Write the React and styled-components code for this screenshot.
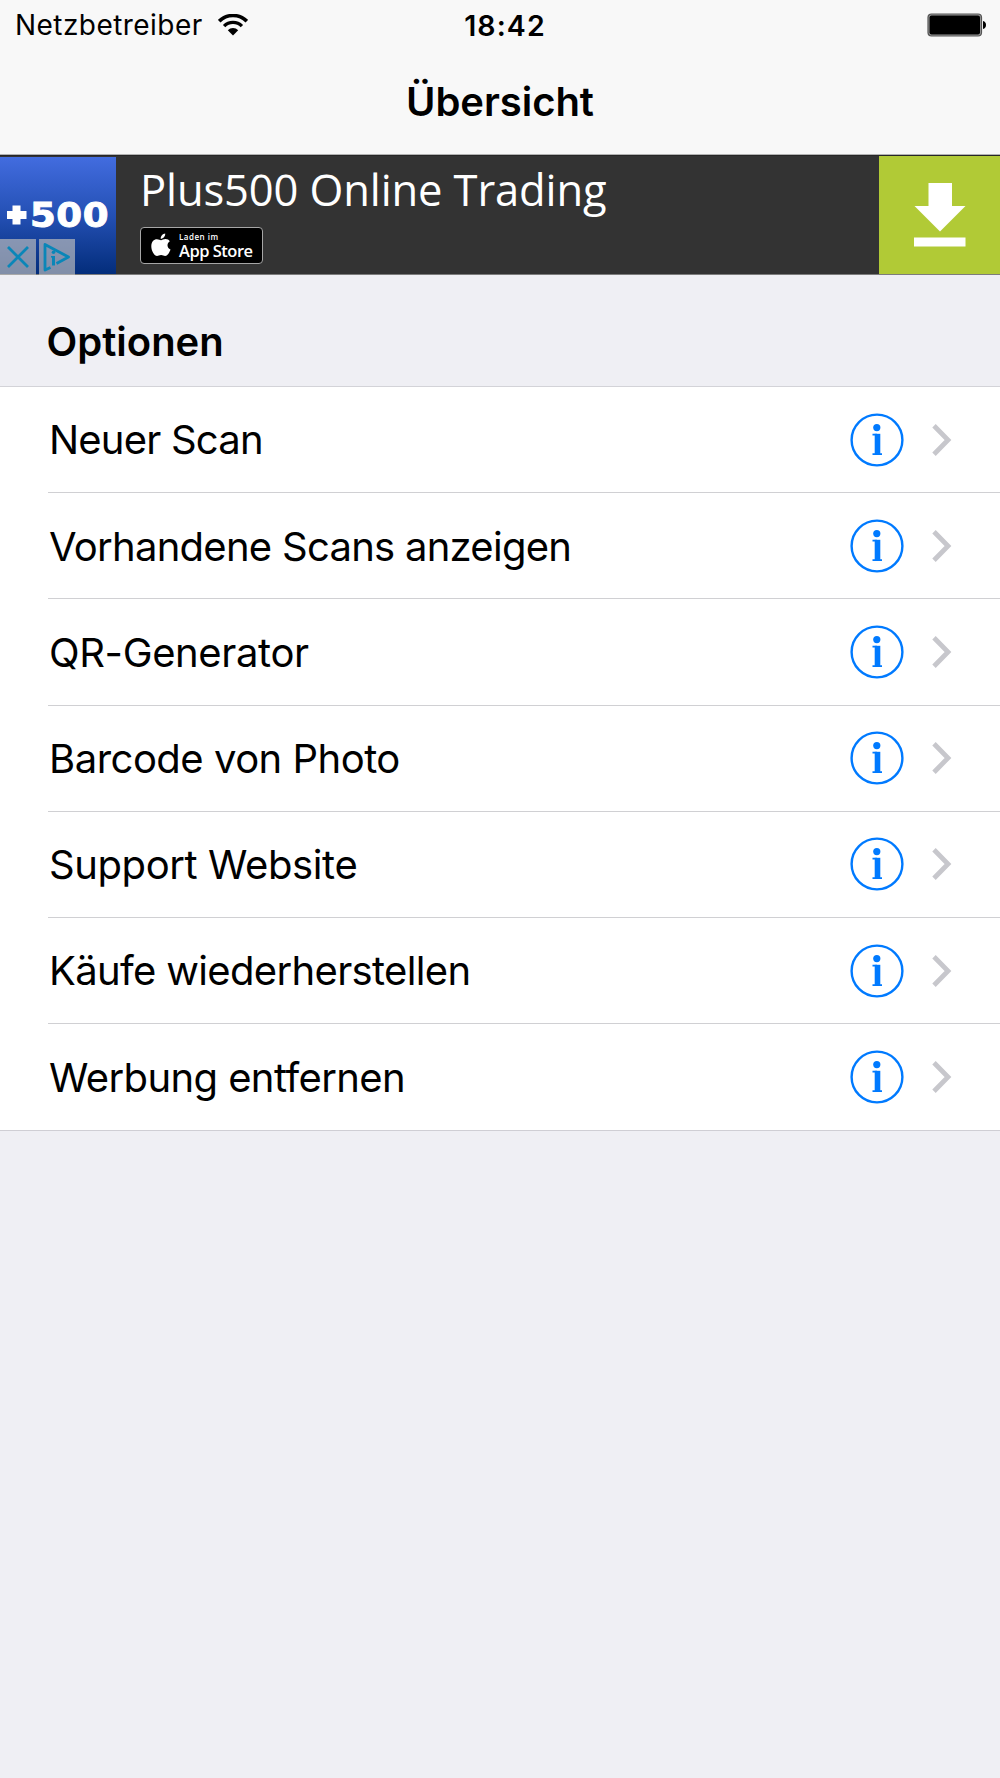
import React from "react";
import styled, { createGlobalStyle } from "styled-components";

const GlobalStyle = createGlobalStyle`
  * {
    box-sizing: border-box;
  }
  body {
    margin: 0;
    background: #efeff4;
    font-family: Inter, "Liberation Sans", sans-serif;
    color: #000;
  }
`;

const Screen = styled.div`
  width: 1000px;
  height: 1778px;
  display: flex;
  flex-direction: column;
  background: #efeff4;
  overflow: hidden;
`;

const TopBar = styled.header`
  height: 155px;
  flex: none;
  background: #f8f8f8;
  border-bottom: 1px solid #b2b2b2;
`;

const StatusBar = styled.div`
  height: 50px;
  display: grid;
  grid-template-columns: 1fr auto 1fr;
  align-items: center;
  padding: 0 13px 0 15px;
`;

const Carrier = styled.div`
  display: flex;
  align-items: center;
  gap: 15px;
  font-size: 28px;
  letter-spacing: 0.45px;
`;

const Clock = styled.div`
  font-size: 28.5px;
  font-weight: 600;
  letter-spacing: 1.1px;
  padding-left: 8px;
`;

const BatterySlot = styled.div`
  display: flex;
  justify-content: flex-end;
`;

const NavTitle = styled.h1`
  margin: 0;
  height: 102px;
  display: flex;
  align-items: center;
  justify-content: center;
  font-size: 40px;
  font-weight: 600;
  letter-spacing: -0.05px;
`;

const AdBanner = styled.section`
  height: 120px;
  flex: none;
  display: flex;
  background: #333;
  border-top: 1px solid #262626;
  border-bottom: 1px solid #7c7c7c;
`;

const AdLogo = styled.div`
  position: relative;
  width: 116px;
  height: 117px;
  margin-top: 1px;
  display: flex;
  align-items: center;
  padding: 0 0 1px 7px;
  gap: 3px;
  background: linear-gradient(#426cdf, #2450b4 50%, #032d7b);
`;

const AdNumber = styled.span`
  color: #fff;
  font-family: "DejaVu Sans", sans-serif;
  font-weight: 700;
  font-size: 34px;
  line-height: 34px;
  letter-spacing: 0.5px;
  -webkit-text-stroke: 1px #fff;
  transform: scaleX(1.09);
  transform-origin: left;
`;

const AdChoices = styled.div`
  position: absolute;
  left: 0;
  bottom: -1px;
  display: flex;
  gap: 3px;
`;

const AdChoice = styled.div`
  width: 36px;
  height: 36px;
  display: flex;
  align-items: center;
  justify-content: center;
  background: rgba(190, 190, 190, 0.68);
`;

const AdBody = styled.div`
  flex: 1;
  display: flex;
  flex-direction: column;
  align-items: flex-start;
  padding: 6px 0 0 24px;
`;

const AdTitle = styled.div`
  color: #fff;
  font-family: "Open Sans", "Noto Sans", sans-serif;
  font-weight: 400;
  font-size: 43.5px;
  line-height: 56px;
  letter-spacing: -0.12px;
  white-space: nowrap;
`;

const StoreBadge = styled.div`
  width: 123px;
  height: 37px;
  margin-top: 9px;
  display: flex;
  align-items: center;
  gap: 8px;
  padding: 0 0 1px 10px;
  background: #000;
  border: 1px solid #a6a6a6;
  border-radius: 4px;
  color: #fff;
  font-family: "Open Sans", "Noto Sans", sans-serif;
`;

const StoreText = styled.div`
  display: flex;
  flex-direction: column;
`;

const StoreHint = styled.span`
  font-size: 8px;
  line-height: 10px;
  font-weight: 600;
  letter-spacing: 0.5px;
`;

const StoreName = styled.span`
  font-size: 16.5px;
  line-height: 17px;
  font-weight: 600;
  letter-spacing: -0.5px;
  white-space: nowrap;
`;

const DownloadButton = styled.div`
  width: 121px;
  display: flex;
  justify-content: center;
  padding-top: 27px;
  background: #b1ca36;
`;

const SectionHeader = styled.h2`
  margin: 0;
  height: 112px;
  flex: none;
  padding: 42px 0 0 46.5px;
  font-size: 40px;
  line-height: 50px;
  font-weight: 600;
  border-bottom: 1px solid #d3d3d8;
`;

const OptionList = styled.ul`
  margin: 0;
  padding: 0;
  list-style: none;
  background: #fff;
  border-bottom: 1px solid #cfced4;
`;

const OptionRow = styled.li`
  height: 106.2px;
  margin-left: 48px;
  padding-right: 48px;
  display: flex;
  align-items: center;
  border-bottom: 1px solid ${(props) => (props.$last ? "transparent" : "#d0d0d3")};
`;

const OptionLabel = styled.span`
  flex: 1;
  padding: 0.6px 0 0 1px;
  font-size: 40px;
  letter-spacing: ${(props) => props.$spacing || 0}px;
  font-variant-ligatures: none;
`;

const InfoIcon = styled.svg`
  width: 54px;
  height: 54px;
  margin-right: 28.5px;
`;

const options = [
  { label: "Neuer Scan", spacing: -0.8 },
  { label: "Vorhandene Scans anzeigen", spacing: -0.73 },
  { label: "QR-Generator", spacing: -0.36 },
  { label: "Barcode von Photo", spacing: -0.5 },
  { label: "Support Website", spacing: -0.4 },
  { label: "Käufe wiederherstellen", spacing: -0.66 },
  { label: "Werbung entfernen", spacing: -0.6 },
];

const Wifi = () => (
  <svg width="30" height="22" viewBox="0 0 30 22" fill="none" stroke="#000">
    <path d="M1.2 7.2A19.5 19.5 0 0 1 28.8 7.2" strokeWidth="3.6" />
    <path d="M6.1 12.1A12.6 12.6 0 0 1 23.9 12.1" strokeWidth="3.4" />
    <path d="M15 21.5L9.8 16.2A7.4 7.4 0 0 1 20.2 16.2Z" fill="#000" stroke="none" />
  </svg>
);

const Battery = () => (
  <svg width="60" height="24" viewBox="0 0 60 24">
    <rect x="1" y="1" width="53.5" height="22" rx="3.5" fill="#999" stroke="#555" strokeWidth="1.2" />
    <rect x="2.5" y="2.5" width="50.5" height="19" rx="2" />
    <path d="M56 8C60 8.5 60 15.5 56 16Z" />
  </svg>
);

const Apple = () => (
  <svg width="20" height="24" viewBox="0 0 20 24" fill="#fff">
    <path d="M14.2 0.5C14.5 3.2 12.2 5.8 9.7 5.8C9.4 3.2 11.8 0.8 14.2 0.5Z" />
    <path d="M10 7.2C11.2 7.2 12.5 6 14.7 6.1C16.4 6.2 17.9 6.9 18.8 8.3C15.4 10.4 15.9 15.1 19.5 16.5C18.4 19.5 16.4 23 14.2 23C12.6 23 12 22 10.1 22C8.2 22 7.5 23 6 23C3.2 23 0.3 17.6 0.3 13.2C0.3 8.8 2.9 6.2 5.9 6.2C7.7 6.2 9 7.2 10 7.2Z" />
  </svg>
);

const App = () => {
  return (
    <>
      <GlobalStyle />
      <Screen>
        <TopBar>
          <StatusBar>
            <Carrier>
              Netzbetreiber
              <Wifi />
            </Carrier>
            <Clock>18:42</Clock>
            <BatterySlot>
              <Battery />
            </BatterySlot>
          </StatusBar>
          <NavTitle>Übersicht</NavTitle>
        </TopBar>

        <AdBanner>
          <AdLogo>
            <svg width="20" height="20" viewBox="0 0 20 20" fill="#fff">
              <path d="M5.5 0.5H13.5V6H19.5V14H13.5V19.5H5.5V14H0V6H5.5Z" />
            </svg>
            <AdNumber>500</AdNumber>
            <AdChoices>
              <AdChoice>
                <svg width="24" height="24" viewBox="0 0 24 24" stroke="#0a86b8" strokeWidth="2.8">
                  <path d="M2 2L22 22M22 2L2 22" />
                </svg>
              </AdChoice>
              <AdChoice>
                <svg width="30" height="30" viewBox="0 0 30 30" fill="none" stroke="#0a86b8" strokeWidth="2.8">
                  <path d="M8.5 25.5L3 28V2.5L26.5 15L14.5 21.5" strokeLinejoin="round" />
                  <path d="M11.5 14V23.500" strokeWidth="3" />
                  <path d="M9 14.800H11.500" strokeWidth="1.600" />
                  <circle cx="11.500" cy="10.200" r="1.800" fill="#0a86b8" stroke="none" />
                </svg>
              </AdChoice>
            </AdChoices>
          </AdLogo>
          <AdBody>
            <AdTitle>Plus500 Online Trading</AdTitle>
            <StoreBadge>
              <Apple />
              <StoreText>
                <StoreHint>Laden im</StoreHint>
                <StoreName>App Store</StoreName>
              </StoreText>
            </StoreBadge>
          </AdBody>
          <DownloadButton>
            <svg width="52" height="64" viewBox="0 0 52 64" fill="#fff">
              <path d="M14.5 0H38V23H51.5L26 48.5L0.5 23H14.5Z" />
              <rect x="0" y="54.5" width="51.5" height="9" />
            </svg>
          </DownloadButton>
        </AdBanner>

        <SectionHeader>Optionen</SectionHeader>
        <OptionList>
          {options.map((option, index) => (
            <OptionRow key={option.label} $last={index === options.length - 1}>
              <OptionLabel $spacing={option.spacing}>{option.label}</OptionLabel>
              <InfoIcon viewBox="0 0 54 54" fill="none" stroke="#007aff">
                <circle cx="27" cy="27" r="25.4" strokeWidth="2.4" />
                <circle cx="26.8" cy="14.6" r="3.6" fill="#007aff" stroke="none" />
                <path d="M22.5 21.6H27M22.5 41.2H32" strokeWidth="1.7" />
                <path d="M27.5 20.8V42" strokeWidth="5.6" />
              </InfoIcon>
              <svg width="20" height="32" viewBox="0 0 20 32" fill="none" stroke="#c7c7cc" strokeWidth="4.8">
                <path d="M2 1.8L16 16L2 30.2" />
              </svg>
            </OptionRow>
          ))}
        </OptionList>
      </Screen>
    </>
  );
};

export default App;
